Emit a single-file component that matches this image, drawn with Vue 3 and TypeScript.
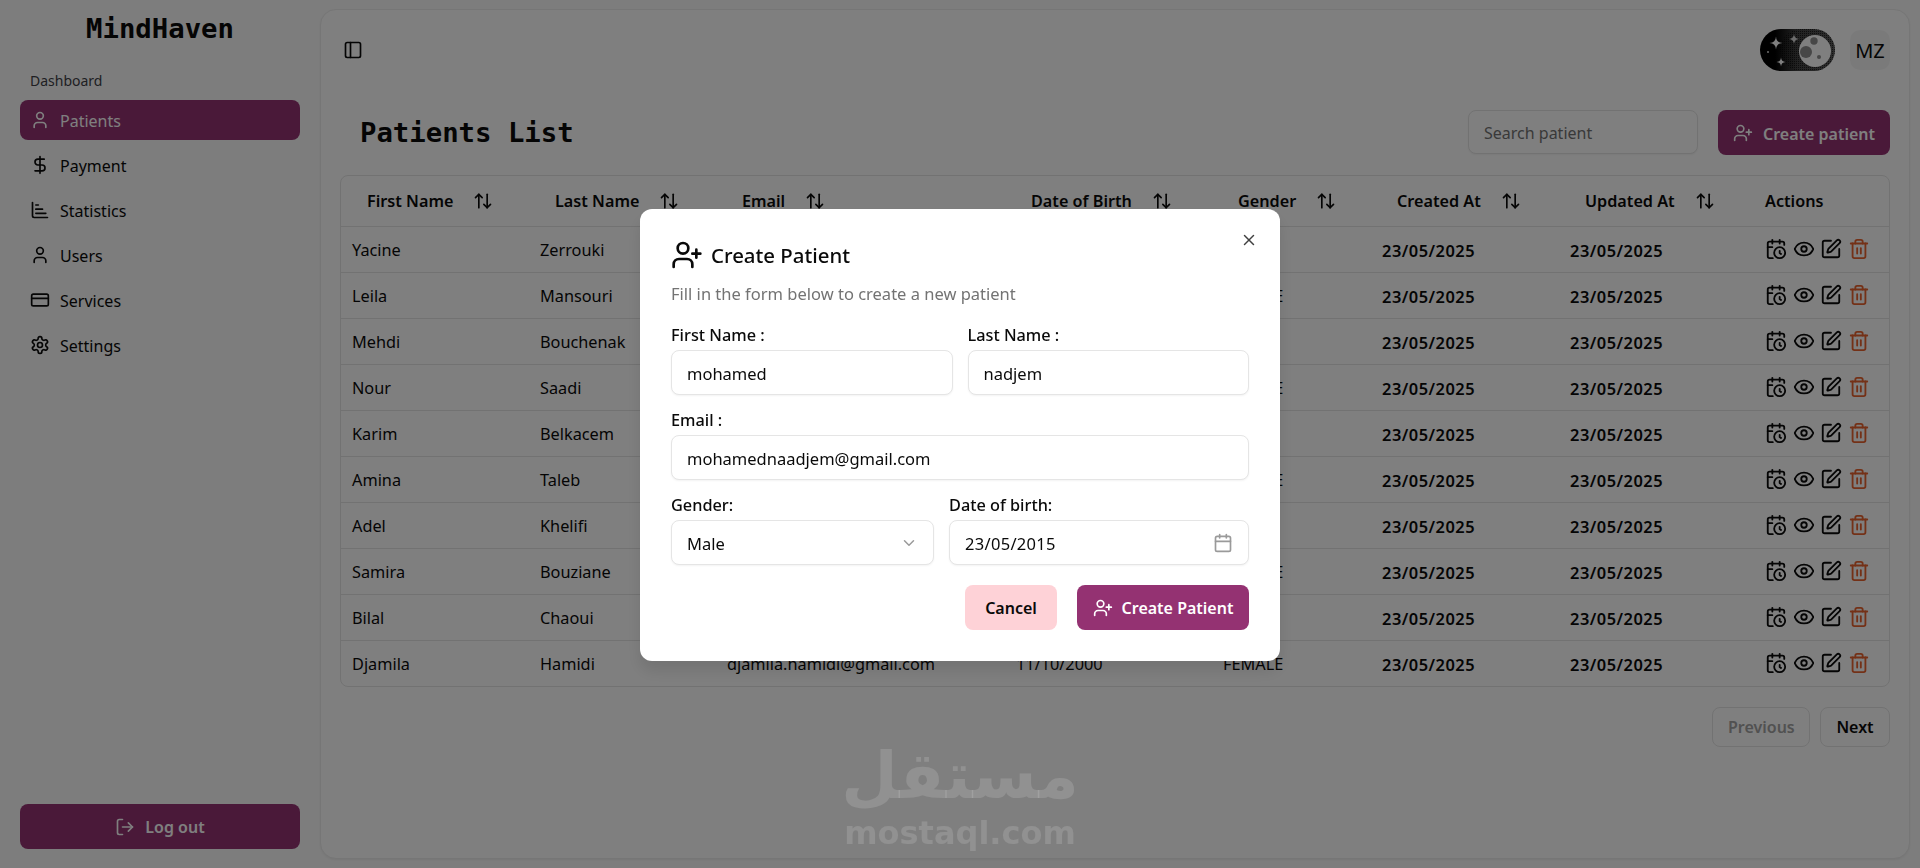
<script setup lang="ts">
import { defineComponent, h } from 'vue'

type Node = [string, Record<string, string | number>]
const ICONS: Record<string, Node[]> = {
  user: [['path', { d: 'M19 21v-2a4 4 0 0 0-4-4H9a4 4 0 0 0-4 4v2' }], ['circle', { cx: 12, cy: 7, r: 4 }]],
  dollar: [['line', { x1: 12, x2: 12, y1: 2, y2: 22 }], ['path', { d: 'M17 5H9.5a3.5 3.5 0 0 0 0 7h5a3.5 3.5 0 0 1 0 7H6' }]],
  chart: [['path', { d: 'M3 3v16a2 2 0 0 0 2 2h16' }], ['path', { d: 'M7 11h8' }], ['path', { d: 'M7 16h12' }], ['path', { d: 'M7 6h3' }]],
  card: [['rect', { width: 20, height: 14, x: 2, y: 5, rx: 2 }], ['line', { x1: 2, x2: 22, y1: 10, y2: 10 }]],
  settings: [['path', { d: 'M12.22 2h-.44a2 2 0 0 0-2 2v.18a2 2 0 0 1-1 1.73l-.43.25a2 2 0 0 1-2 0l-.15-.08a2 2 0 0 0-2.73.73l-.22.38a2 2 0 0 0 .73 2.73l.15.1a2 2 0 0 1 1 1.72v.51a2 2 0 0 1-1 1.74l-.15.09a2 2 0 0 0-.73 2.73l.22.38a2 2 0 0 0 2.73.73l.15-.08a2 2 0 0 1 2 0l.43.25a2 2 0 0 1 1 1.73V20a2 2 0 0 0 2 2h.44a2 2 0 0 0 2-2v-.18a2 2 0 0 1 1-1.73l.43-.25a2 2 0 0 1 2 0l.15.08a2 2 0 0 0 2.73-.73l.22-.39a2 2 0 0 0-.73-2.73l-.15-.08a2 2 0 0 1-1-1.74v-.5a2 2 0 0 1 1-1.74l.15-.09a2 2 0 0 0 .73-2.73l-.22-.38a2 2 0 0 0-2.73-.73l-.15.08a2 2 0 0 1-2 0l-.43-.25a2 2 0 0 1-1-1.73V4a2 2 0 0 0-2-2z' }], ['circle', { cx: 12, cy: 12, r: 3 }]],
  logout: [['path', { d: 'M9 21H5a2 2 0 0 1-2-2V5a2 2 0 0 1 2-2h4' }], ['polyline', { points: '16 17 21 12 16 7' }], ['line', { x1: 21, x2: 9, y1: 12, y2: 12 }]],
  userplus: [['path', { d: 'M16 21v-2a4 4 0 0 0-4-4H6a4 4 0 0 0-4 4v2' }], ['circle', { cx: 9, cy: 7, r: 4 }], ['line', { x1: 19, x2: 19, y1: 8, y2: 14 }], ['line', { x1: 22, x2: 16, y1: 11, y2: 11 }]],
  sort: [['path', { d: 'm21 16-4 4-4-4' }], ['path', { d: 'M17 20V4' }], ['path', { d: 'm3 8 4-4 4 4' }], ['path', { d: 'M7 4v16' }]],
  panel: [['rect', { width: 18, height: 18, x: 3, y: 3, rx: 2 }], ['path', { d: 'M9 3v18' }]],
  x: [['path', { d: 'M18 6 6 18' }], ['path', { d: 'm6 6 12 12' }]],
  chevron: [['path', { d: 'm6 9 6 6 6-6' }]],
  calendar: [['path', { d: 'M8 2v4' }], ['path', { d: 'M16 2v4' }], ['rect', { width: 18, height: 18, x: 3, y: 4, rx: 2 }], ['path', { d: 'M3 10h18' }]],
  calclock: [['path', { d: 'M21 7.5V6a2 2 0 0 0-2-2H5a2 2 0 0 0-2 2v14a2 2 0 0 0 2 2h3.5' }], ['path', { d: 'M16 2v4' }], ['path', { d: 'M8 2v4' }], ['path', { d: 'M3 10h5' }], ['path', { d: 'M17.5 17.5 16 16.3V14' }], ['circle', { cx: 16, cy: 16, r: 6 }]],
  eye: [['path', { d: 'M2.062 12.348a1 1 0 0 1 0-.696 10.75 10.75 0 0 1 19.876 0 1 1 0 0 1 0 .696 10.75 10.75 0 0 1-19.876 0' }], ['circle', { cx: 12, cy: 12, r: 3 }]],
  pen: [['path', { d: 'M12 3H5a2 2 0 0 0-2 2v14a2 2 0 0 0 2 2h14a2 2 0 0 0 2-2v-7' }], ['path', { d: 'M18.375 2.625a1 1 0 0 1 3 3l-9.013 9.014a2 2 0 0 1-.853.505l-2.873.84a.5.5 0 0 1-.62-.62l.84-2.873a2 2 0 0 1 .506-.852z' }]],
  trash: [['path', { d: 'M3 6h18' }], ['path', { d: 'M19 6v14c0 1-1 2-2 2H7c-1 0-2-1-2-2V6' }], ['path', { d: 'M8 6V4c0-1 1-2 2-2h4c1 0 2 1 2 2v2' }], ['line', { x1: 10, x2: 10, y1: 11, y2: 17 }], ['line', { x1: 14, x2: 14, y1: 11, y2: 17 }]],
}

const Icon = defineComponent({
  props: { name: { type: String, required: true }, size: { type: Number, default: 20 } },
  setup(props) {
    return () =>
      h(
        'svg',
        {
          width: props.size,
          height: props.size,
          viewBox: '0 0 24 24',
          fill: 'none',
          stroke: 'currentColor',
          'stroke-width': 2,
          'stroke-linecap': 'round',
          'stroke-linejoin': 'round',
          style: { flex: 'none', display: 'block' },
        },
        (ICONS[props.name] || []).map(([tag, attrs]) => h(tag, attrs)),
      )
  },
})

const navItems = [
  { label: 'Patients', icon: 'user', active: true },
  { label: 'Payment', icon: 'dollar', active: false },
  { label: 'Statistics', icon: 'chart', active: false },
  { label: 'Users', icon: 'user', active: false },
  { label: 'Services', icon: 'card', active: false },
  { label: 'Settings', icon: 'settings', active: false },
]

const columns = ['First Name', 'Last Name', 'Email', 'Date of Birth', 'Gender', 'Created At', 'Updated At']

const patients = [
  ['Yacine', 'Zerrouki', 'yacine.zerrouki@gmail.com', '15/03/1990', 'MALE'],
  ['Leila', 'Mansouri', 'leila.mansouri@gmail.com', '22/07/1985', 'FEMALE'],
  ['Mehdi', 'Bouchenak', 'mehdi.bouchenak@gmail.com', '03/11/1992', 'MALE'],
  ['Nour', 'Saadi', 'nour.saadi@gmail.com', '09/01/1998', 'FEMALE'],
  ['Karim', 'Belkacem', 'karim.belkacem@gmail.com', '27/05/1988', 'MALE'],
  ['Amina', 'Taleb', 'amina.taleb@gmail.com', '14/09/1995', 'FEMALE'],
  ['Adel', 'Khelifi', 'adel.khelifi@gmail.com', '30/12/1983', 'MALE'],
  ['Samira', 'Bouziane', 'samira.bouziane@gmail.com', '18/06/1991', 'FEMALE'],
  ['Bilal', 'Chaoui', 'bilal.chaoui@gmail.com', '05/02/1996', 'MALE'],
  ['Djamila', 'Hamidi', 'djamila.hamidi@gmail.com', '11/10/2000', 'FEMALE'],
]
</script>

<template>
  <div class="app">
    <aside class="sidebar">
      <div class="logo">MindHaven</div>
      <div class="group-label">Dashboard</div>
      <nav class="nav">
        <a v-for="item in navItems" :key="item.label" class="nav-item" :class="{ active: item.active }">
          <Icon :name="item.icon" :size="20" />
          <span>{{ item.label }}</span>
        </a>
      </nav>
      <button class="logout"><Icon name="logout" :size="20" /><span>Log out</span></button>
    </aside>

    <main class="panel">
      <header class="topbar">
        <span class="panel-toggle"><Icon name="panel" :size="20" /></span>
        <div class="top-right">
          <div class="theme-toggle">
            <svg width="75" height="42" viewBox="0 0 75 42">
              <defs>
                <linearGradient id="night" x1="0" x2="1" y1="0" y2="0">
                  <stop offset="0.2" stop-color="#000" />
                  <stop offset="0.5" stop-color="#444" />
                  <stop offset="1" stop-color="#5c5c5c" />
                </linearGradient>
                <pattern id="dither" width="2" height="2" patternUnits="userSpaceOnUse">
                  <rect width="1" height="1" fill="#000" />
                </pattern>
              </defs>
              <rect width="75" height="42" rx="21" fill="url(#night)" />
              <rect x="20" width="55" height="42" rx="21" fill="url(#dither)" opacity="0.6" />
              <circle cx="55" cy="22" r="16" fill="#fff" />
              <circle cx="46" cy="23" r="6" fill="#8e8e8e" />
              <circle cx="54" cy="12" r="3.7" fill="#8e8e8e" />
              <circle cx="59" cy="28" r="2" fill="#8e8e8e" />
              <path d="M16 7.5Q16.3 13.7 22.5 14 16.3 14.3 16 20.5 15.7 14.3 9.5 14 15.7 13.7 16 7.5Z" fill="#fff" />
              <path d="M34 5Q34.3 9.7 39 10 34.3 10.3 34 15 33.7 10.3 29 10 33.7 9.7 34 5Z" fill="#d8d8d8" />
              <path d="M21 28.5Q21.3 32.7 25.5 33 21.3 33.3 21 37.5 20.7 33.3 16.5 33 20.7 32.7 21 28.5Z" fill="#fff" />
              <circle cx="8" cy="23" r="1" fill="#ddd" />
            </svg>
          </div>
          <div class="avatar">MZ</div>
        </div>
      </header>

      <section class="toolbar">
        <h1 class="title">Patients List</h1>
        <div class="tools">
          <input class="search" placeholder="Search patient" />
          <button class="create-btn"><Icon name="userplus" :size="20" /><span>Create patient</span></button>
        </div>
      </section>

      <div class="table-wrap">
        <table class="table">
          <colgroup>
            <col class="c1" /><col class="c2" /><col class="c3" /><col class="c4" />
            <col class="c5" /><col class="c6" /><col class="c7" /><col class="c8" />
          </colgroup>
          <thead>
            <tr>
              <th v-for="col in columns" :key="col">
                <span class="th-inner"><span>{{ col }}</span><Icon name="sort" :size="20" /></span>
              </th>
              <th class="actions-head">Actions</th>
            </tr>
          </thead>
          <tbody>
            <tr v-for="p in patients" :key="p[2]">
              <td>{{ p[0] }}</td>
              <td>{{ p[1] }}</td>
              <td>{{ p[2] }}</td>
              <td>{{ p[3] }}</td>
              <td>{{ p[4] }}</td>
              <td class="date">23/05/2025</td>
              <td class="date">23/05/2025</td>
              <td class="actions-cell">
                <span class="row-actions">
                  <Icon name="calclock" :size="22" />
                  <Icon name="eye" :size="22" />
                  <Icon name="pen" :size="22" />
                  <span class="danger"><Icon name="trash" :size="22" /></span>
                </span>
              </td>
            </tr>
          </tbody>
        </table>
      </div>

      <div class="pager">
        <button class="page-btn disabled">Previous</button>
        <button class="page-btn">Next</button>
      </div>
    </main>

    <div class="watermark" aria-hidden="true">
      <span class="wm-ar" lang="ar" dir="rtl">مستقل</span>
      <span class="wm-en">mostaql.com</span>
    </div>

    <div class="overlay">
      <div class="modal">
        <span class="close"><Icon name="x" :size="18" /></span>
        <div class="modal-title"><Icon name="userplus" :size="32" /><h2>Create Patient</h2></div>
        <p class="modal-desc">Fill in the form below to create a new patient</p>

        <div class="row even">
          <label class="field"><span>First Name :</span><input class="input" value="mohamed" /></label>
          <label class="field"><span>Last Name :</span><input class="input" value="nadjem" /></label>
        </div>
        <label class="field"><span>Email :</span><input class="input" value="mohamednaadjem@gmail.com" /></label>
        <div class="row split">
          <div class="field">
            <span>Gender:</span>
            <div class="input control"><span class="val">Male</span><span class="muted"><Icon name="chevron" :size="18" /></span></div>
          </div>
          <div class="field">
            <span>Date of birth:</span>
            <div class="input control"><span class="val spaced">23/05/2015</span><span class="muted"><Icon name="calendar" :size="20" /></span></div>
          </div>
        </div>
        <div class="modal-actions">
          <button class="cancel">Cancel</button>
          <button class="submit"><Icon name="userplus" :size="20" /><span>Create Patient</span></button>
        </div>
      </div>
    </div>
  </div>
</template>

<style>
html, body { margin: 0; padding: 0; background: #fafafa; }
</style>

<style scoped>
* { box-sizing: border-box; }
.app {
  --purple: #943272;
  display: flex;
  height: 868px;
  overflow: hidden;
  background: #fafafa;
  color: #0a0a0a;
  font-family: "Noto Sans", "Open Sans", sans-serif;
  font-size: 16px;
  position: relative;
}
button, input { font-family: inherit; }

.sidebar { width: 320px; flex: none; display: flex; flex-direction: column; padding: 0 20px 19px; }
.logo {
  height: 58px; line-height: 58px; text-align: center;
  font-family: "DejaVu Sans Mono", monospace; font-weight: 700; font-size: 27.3px;
}
.group-label { margin: 12px 0 0 10px; height: 22px; line-height: 22px; font-size: 14px; color: #3f3f46; }
.nav { display: flex; flex-direction: column; gap: 5px; margin-top: 8px; flex: 1; }
.nav-item {
  height: 40px; border-radius: 8px; display: flex; align-items: center; gap: 10px; padding: 0 10px;
  font-size: 16px; color: #0a0a0a;
}
.nav-item span { padding-top: 2px; }
.nav-item.active { background: var(--purple); color: #fff; }
.logout {
  height: 45px; border: 0; border-radius: 8px; background: var(--purple); color: #fff;
  display: flex; align-items: center; justify-content: center; gap: 10px; font-size: 16px; font-weight: 600;
}

.panel {
  flex: 1; margin: 9px 10px 9px 0; padding: 19px 19px 0; background: #fff;
  border: 1px solid #ececec; border-radius: 16px; box-shadow: 0 1px 2px rgba(0, 0, 0, 0.05);
}
.topbar { height: 42px; display: flex; align-items: center; justify-content: space-between; }
.panel-toggle { margin-left: 3px; }
.top-right { display: flex; align-items: center; gap: 15px; }
.theme-toggle { width: 75px; height: 42px; }
.theme-toggle svg { display: block; }
.avatar {
  width: 40px; height: 40px; border-radius: 10px; background: #f5f5f5;
  display: flex; align-items: center; justify-content: center; font-size: 20px;
}

.toolbar { display: flex; align-items: center; justify-content: space-between; margin-top: 39px; height: 45px; }
.title { margin: 0 0 0 20px; font-family: "DejaVu Sans Mono", monospace; font-weight: 700; font-size: 27.3px; }
.tools { display: flex; gap: 20px; }
.search {
  width: 230px; height: 44px; border: 1px solid #e5e5e5; border-radius: 8px; padding: 2px 15px 0;
  font-size: 16px; background: #fff; outline: none; box-shadow: 0 1px 2px rgba(0, 0, 0, 0.05);
}
.search::placeholder { color: #737373; }
.create-btn {
  width: 172px; height: 45px; border: 0; border-radius: 8px; background: var(--purple); color: #fff;
  display: flex; align-items: center; justify-content: center; gap: 10px; font-size: 16px; font-weight: 600; padding: 0;
}
.create-btn span { padding-top: 2px; }

.table-wrap { margin-top: 20px; border: 1px solid #e5e5e5; border-radius: 8px; overflow: hidden; }
.table { width: 100%; border-collapse: collapse; table-layout: fixed; font-size: 16.3px; }
.c1 { width: 188px; } .c2 { width: 187px; } .c3 { width: 289px; } .c4 { width: 207px; }
.c5 { width: 159px; } .c6 { width: 188px; } .c7 { width: 194px; }
th { height: 50px; padding: 1px 0 0 26px; text-align: left; font-weight: 600; font-size: 16.2px; }
th.actions-head { padding-left: 12px; }
.th-inner { display: flex; align-items: center; gap: 20px; }
td { height: 46px; padding: 2px 0 0 11px; border-top: 1px solid #e5e5e5; white-space: nowrap; overflow: hidden; }
td.date { font-weight: 600; font-size: 16.4px; letter-spacing: 0.5px; }
td.actions-cell { padding: 0 0 0 12px; }
.row-actions { display: flex; gap: 5.5px; }
.danger { color: #e8622e; }

.pager { display: flex; justify-content: flex-end; gap: 10px; margin-top: 20px; }
.page-btn {
  height: 40px; padding: 0 15px; border: 1px solid #e5e5e5; border-radius: 8px; background: #fff;
  color: #0a0a0a; font-size: 16px; font-weight: 600;
}
.page-btn.disabled { color: #a3a3a3; width: 98px; }
.page-btn:not(.disabled) { width: 70px; }

.watermark {
  position: absolute; left: 840px; top: 738px; width: 240px; display: flex; flex-direction: column; align-items: center;
  color: rgba(255, 255, 255, 0.14); pointer-events: none; z-index: 3;
}
.wm-ar { font-family: "DejaVu Sans", sans-serif; font-weight: 700; font-size: 65px; line-height: 76px; }
.wm-en { font-family: "DejaVu Sans", sans-serif; font-weight: 700; font-size: 32px; line-height: 38px; }

.overlay {
  position: fixed; inset: 0; background: rgba(0, 0, 0, 0.5); display: flex; align-items: center; justify-content: center;
  padding-top: 2px; z-index: 2;
}
.modal {
  position: relative; width: 640px; padding: 32px 31px 31px; background: #fff; border-radius: 12px;
  display: flex; flex-direction: column; box-shadow: 0 10px 15px rgba(0, 0, 0, 0.1);
}
.close { position: absolute; top: 22px; right: 22px; color: #404040; }
.modal-title { display: flex; align-items: center; gap: 8px; height: 27px; }
.modal-title h2 { margin: 0; font-size: 20.4px; font-weight: 500; }
.modal-desc { margin: 14px 0 19px; height: 24px; line-height: 24px; font-size: 16.5px; color: #737373; }
.row { display: grid; gap: 12px; }
.row.even { grid-template-columns: 1fr 1fr; gap: 15px; }
.row.split { grid-template-columns: 263px 1fr; gap: 15px; }
.field { display: flex; flex-direction: column; gap: 5px; margin-bottom: 15px; font-size: 16.3px; font-weight: 500; }
.field > span { height: 20px; line-height: 20px; }
.input {
  width: 100%; height: 45px; border: 1px solid #e5e5e5; border-radius: 8px; padding: 1px 15px 0; background: #fff;
  font-size: 16.5px; font-weight: 400; color: #0a0a0a; outline: none; box-shadow: 0 1px 2px rgba(0, 0, 0, 0.05);
}
.control { display: flex; align-items: center; justify-content: space-between; }
.spaced { letter-spacing: 0.3px; }
.muted { color: #9a9a9a; }
.modal-actions { display: flex; justify-content: flex-end; gap: 20px; margin-top: 5px; }
.cancel, .submit { height: 45px; border: 0; border-radius: 8px; font-size: 16px; font-weight: 600; }
.cancel { width: 92px; background: #fed2d7; color: #0a0a0a; }
.submit {
  width: 172px; background: var(--purple); color: #fff; display: flex; align-items: center; justify-content: center; gap: 9px; padding: 0;
}
</style>
